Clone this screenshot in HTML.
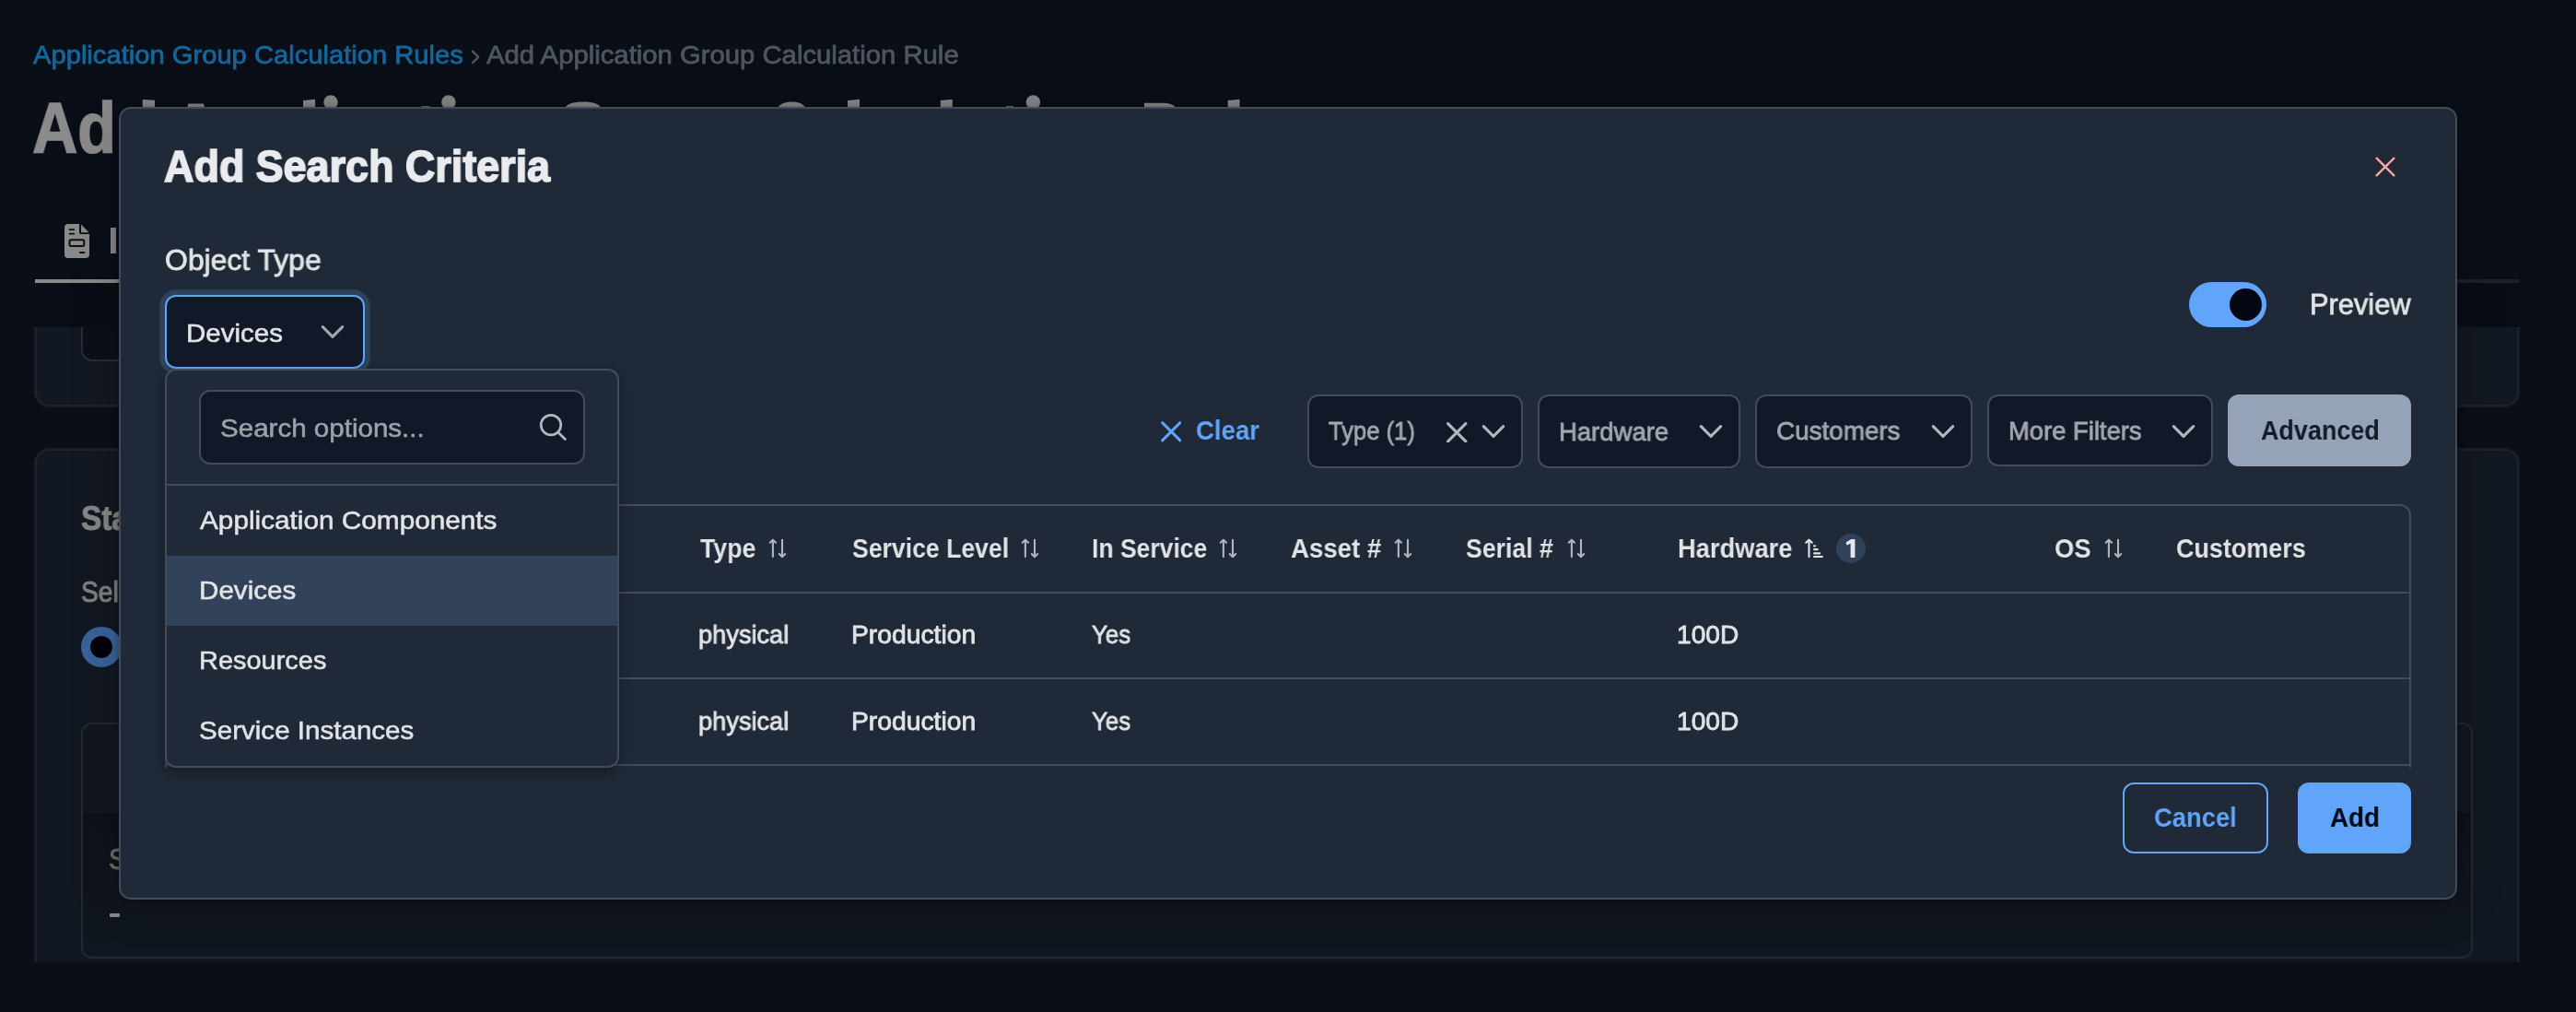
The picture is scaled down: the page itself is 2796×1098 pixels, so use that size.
<!DOCTYPE html>
<html><head><meta charset="utf-8"><title>Add Application Group Calculation Rule</title>
<style>
html,body{margin:0;padding:0}
body{width:2796px;height:1098px;overflow:hidden;background:#0a0e17;position:relative;font-family:"Liberation Sans",sans-serif}
.a{position:absolute;display:block}
.t{position:absolute;white-space:nowrap;line-height:1;transform-origin:0 0;display:block;will-change:transform}
.box{position:absolute;box-sizing:border-box}
#modal{left:129px;top:116px;width:2538px;height:860px;background:#1f2937;border:2px solid #424b57;border-radius:13px;box-shadow:0 2px 8px rgba(0,0,0,.3),0 0 56px rgba(0,0,0,.2)}
.inp{background:#111827;border:2px solid #424b57;border-radius:12px}
.hl{position:absolute;background:#424b57}
</style></head><body>

<!-- ============ dimmed page behind the dialog ============ -->
<div id="page">
<svg class="a" style="left:510px;top:53px" width="12" height="18" viewBox="0 0 12 18" fill="none" stroke="#4e5661" stroke-width="2.4" stroke-linecap="round" stroke-linejoin="round"><path d="M3 2.6L9.2 8.9L3 15.2"/></svg>

<!-- tops of the page title glyphs peeking above the dialog -->
<svg class="a" style="left:129px;top:96px" width="1300" height="22" viewBox="129 96 1300 22" fill="#8a8a8a">
 <path d="M154.8 118V107.9L168 108.8V118Z"/>
 <path d="M203 118L204.4 112.5H221L222.6 118Z"/>
 <path d="M329 118V108.9L342.1 107.7V118Z"/>
 <circle cx="359" cy="110.9" r="7.7"/>
 <path d="M457.5 118V115.2H466.5V118Z"/>
 <circle cx="486.9" cy="110.9" r="7.7"/>
 <path d="M613 118C614.5 112.6 622 110.4 633 110.4C644 110.4 651 112.6 653 118Z"/>
 <path d="M843 118C846 112.6 852 110.4 859.5 110.4C867 110.4 872.5 112.6 875 118Z"/>
 <path d="M920 118V108.9L933 107.7V118Z"/>
 <path d="M1020.8 118V108.9L1033.8 107.7V118Z"/>
 <path d="M1092 118V115.2H1100V118Z"/>
 <circle cx="1121.4" cy="110.9" r="7.7"/>
 <path d="M1242 118V111.7H1262C1270 111.7 1275 114 1277 118Z"/>
 <path d="M1332.7 118V108.9L1345.5 107.7V118Z"/>
</svg>

<!-- tab -->
<svg class="a" style="left:70px;top:243px" width="27" height="37" viewBox="0 0 27 37">
 <path d="M4 0H16V9.2Q16 11 17.8 11H27V33Q27 37 23 37H4Q0 37 0 33V4Q0 0 4 0Z" fill="#8a8a8a"/>
 <path d="M18 .6L26.6 9.2H18Z" fill="#8a8a8a"/>
 <rect x="4.7" y="5.2" width="6.4" height="1.9" rx=".9" fill="#0a0e17"/>
 <rect x="4.7" y="9.7" width="6.4" height="1.9" rx=".9" fill="#0a0e17"/>
 <rect x="5.5" y="17.3" width="15.8" height="6.6" rx="1.6" fill="none" stroke="#0a0e17" stroke-width="2"/>
 <rect x="16" y="30.1" width="6.3" height="1.9" rx=".9" fill="#0a0e17"/>
</svg>
<div class="a" style="left:119.8px;top:247px;width:6.2px;height:28px;background:#878787"></div>
<div class="a" style="left:38px;top:303px;width:2696px;height:4px;background:#1c2129"></div>
<div class="a" style="left:38px;top:303px;width:420px;height:4px;background:#8a8a8a"></div>
<div class="a" style="left:38px;top:307px;width:2696px;height:48px;background:#090d15"></div>

<!-- card 1 (scrolled under sticky band) -->
<div class="box" style="left:38px;top:339px;width:2696px;height:102px;background:#121821;border:2px solid #1e242d;border-radius:16px;clip-path:inset(16px -6px -6px -6px);box-shadow:0 0 3px 1px rgba(36,42,52,.55)"></div>
<div class="box" style="left:88px;top:340px;width:1200px;height:52px;background:#0b0f17;border:2px solid #272d38;border-radius:12px;clip-path:inset(15px 0 0 0)"></div>

<!-- card 2 -->
<div class="box" style="left:38px;top:487px;width:2696px;height:600px;background:#121821;border:2px solid #1e242d;border-radius:16px;clip-path:inset(-6px -6px 43.5px -6px);box-shadow:0 0 3px 1px rgba(36,42,52,.55)"></div>
<div class="a" style="left:88px;top:680px;width:44px;height:44px;border-radius:50%;box-sizing:border-box;border:10px solid #3a6399;background:#020409"></div>
<div class="box" style="left:88px;top:784px;width:2596px;height:256px;background:linear-gradient(#0d1118 38%,#111720 100%);border:2px solid #232933;border-radius:12px;overflow:hidden"><div style="height:96px;background:#12171f"></div></div>
<div class="a" style="left:119.3px;top:991px;width:11.2px;height:3.6px;background:#8a8a8a;border-radius:1px"></div>
<span class="t" id="bc1" style="left:36.20px;top:46.29px;font-size:28px;font-weight:400;color:#14679c;-webkit-text-stroke:0.8px #14679c;transform:scaleX(1.0415);">Application Group Calculation Rules</span>
<span class="t" id="bc2" style="left:528.40px;top:46.29px;font-size:28px;font-weight:400;color:#4e5661;-webkit-text-stroke:0.8px #4e5661;transform:scaleX(1.0456);">Add Application Group Calculation Rule</span>
<span class="t" id="title" style="left:35.29px;top:100.80px;font-size:77px;font-weight:700;color:#8b8b8b;-webkit-text-stroke:1.5px #8b8b8b;transform:scaleX(0.8855);">Ad</span>
<span class="t" id="sta" style="left:88.35px;top:543.97px;font-size:37px;font-weight:700;color:#878787;-webkit-text-stroke:1px #878787;transform:scaleX(0.9000);">Static</span>
<span class="t" id="sel" style="left:88.37px;top:625.91px;font-size:32px;font-weight:400;color:#818181;-webkit-text-stroke:1px #818181;transform:scaleX(0.8800);">Sel</span>
<span class="t" id="s2" style="left:117.72px;top:915.91px;font-size:32px;font-weight:400;color:#6e6e6e;-webkit-text-stroke:0.9px #6e6e6e;transform:scaleX(0.9000);">S</span>
</div>

<!-- ============ dialog ============ -->
<div class="box" id="modal"></div>
<div id="dlg">
<svg class="a" style="left:2578px;top:170px" width="22" height="22" viewBox="0 0 22 22" fill="none" stroke="#fca5a5" stroke-width="2.3" stroke-linecap="round"><path d="M1.6 1.6L20.4 20.4M20.4 1.6L1.6 20.4"/></svg>

<!-- object type select (focused) -->
<div class="box" style="left:179px;top:320px;width:217px;height:80px;background:#111827;border:2px solid #60a5fa;border-radius:12px;box-shadow:0 0 0 5.7px #2c425e"></div>
<svg class="a" style="left:348px;top:352px" width="26" height="16" viewBox="0 0 26 16" fill="none" stroke="#a3a7ae" stroke-width="3.1" stroke-linecap="round" stroke-linejoin="round"><path d="M2.3 2.6L13 13.3L23.7 2.6"/></svg>

<!-- preview switch -->
<div class="a" style="left:2376px;top:306px;width:84px;height:49px;border-radius:25px;background:#60a5fa"></div>
<div class="a" style="left:2420px;top:313px;width:35px;height:35px;border-radius:50%;background:#030712"></div>

<!-- filter bar -->
<svg class="a" style="left:1259.5px;top:457px" width="22.5" height="22.5" viewBox="0 0 22.5 22.5" fill="none" stroke="#60a5fa" stroke-width="2.9" stroke-linecap="round"><path d="M1.6 1.6L20.9 20.9M20.9 1.6L1.6 20.9"/></svg>
<div class="box inp" style="left:1419px;top:428px;width:234px;height:80px"></div>
<svg class="a" style="left:1570px;top:457.7px" width="22.5" height="22.5" viewBox="0 0 22.5 22.5" fill="none" stroke="#b2b6bd" stroke-width="3.1" stroke-linecap="round"><path d="M1.6 1.6L20.9 20.9M20.9 1.6L1.6 20.9"/></svg>
<svg class="a" style="left:1608px;top:460px" width="26" height="16" viewBox="0 0 26 16" fill="none" stroke="#b2b6bd" stroke-width="3.1" stroke-linecap="round" stroke-linejoin="round"><path d="M2.3 2.6L13 13.3L23.7 2.6"/></svg>
<div class="box inp" style="left:1669px;top:428px;width:220px;height:80px"></div>
<svg class="a" style="left:1843.6px;top:460px" width="26" height="16" viewBox="0 0 26 16" fill="none" stroke="#b2b6bd" stroke-width="3.1" stroke-linecap="round" stroke-linejoin="round"><path d="M2.3 2.6L13 13.3L23.7 2.6"/></svg>
<div class="box inp" style="left:1905px;top:428px;width:236px;height:80px"></div>
<svg class="a" style="left:2096px;top:460px" width="26" height="16" viewBox="0 0 26 16" fill="none" stroke="#b2b6bd" stroke-width="3.1" stroke-linecap="round" stroke-linejoin="round"><path d="M2.3 2.6L13 13.3L23.7 2.6"/></svg>
<div class="box inp" style="left:2157px;top:428px;width:245px;height:78px"></div>
<svg class="a" style="left:2357px;top:460px" width="26" height="16" viewBox="0 0 26 16" fill="none" stroke="#b2b6bd" stroke-width="3.1" stroke-linecap="round" stroke-linejoin="round"><path d="M2.3 2.6L13 13.3L23.7 2.6"/></svg>
<div class="a" style="left:2418px;top:428px;width:199px;height:78px;border-radius:12px;background:#94a3b8"></div>

<!-- data table -->
<div class="box" style="left:179px;top:547px;width:2438px;height:300px;border:2px solid #424b57;border-radius:12px;clip-path:inset(0 0 14px 0)"></div>
<div class="hl" style="left:181px;top:642px;width:2434px;height:2px"></div>
<div class="hl" style="left:181px;top:735px;width:2434px;height:2px"></div>
<div class="hl" style="left:181px;top:829px;width:2434px;height:2px"></div>
<svg class="a" style="left:834px;top:584px" width="20" height="22" viewBox="0 0 20 22" fill="none" stroke="#b1b5bd" stroke-width="2.1" stroke-linecap="round" stroke-linejoin="round"><path d="M4.9 20.1V1.7M1.75 4.75L4.9 1.7L8.05 4.75M15 1.8V20.2M11.8 17.1L15 20.2L18.2 17.1"/></svg><svg class="a" style="left:1108px;top:584px" width="20" height="22" viewBox="0 0 20 22" fill="none" stroke="#b1b5bd" stroke-width="2.1" stroke-linecap="round" stroke-linejoin="round"><path d="M4.9 20.1V1.7M1.75 4.75L4.9 1.7L8.05 4.75M15 1.8V20.2M11.8 17.1L15 20.2L18.2 17.1"/></svg><svg class="a" style="left:1323px;top:584px" width="20" height="22" viewBox="0 0 20 22" fill="none" stroke="#b1b5bd" stroke-width="2.1" stroke-linecap="round" stroke-linejoin="round"><path d="M4.9 20.1V1.7M1.75 4.75L4.9 1.7L8.05 4.75M15 1.8V20.2M11.8 17.1L15 20.2L18.2 17.1"/></svg><svg class="a" style="left:1513px;top:584px" width="20" height="22" viewBox="0 0 20 22" fill="none" stroke="#b1b5bd" stroke-width="2.1" stroke-linecap="round" stroke-linejoin="round"><path d="M4.9 20.1V1.7M1.75 4.75L4.9 1.7L8.05 4.75M15 1.8V20.2M11.8 17.1L15 20.2L18.2 17.1"/></svg><svg class="a" style="left:1700.7px;top:584px" width="20" height="22" viewBox="0 0 20 22" fill="none" stroke="#b1b5bd" stroke-width="2.1" stroke-linecap="round" stroke-linejoin="round"><path d="M4.9 20.1V1.7M1.75 4.75L4.9 1.7L8.05 4.75M15 1.8V20.2M11.8 17.1L15 20.2L18.2 17.1"/></svg><svg class="a" style="left:2284px;top:584px" width="20" height="22" viewBox="0 0 20 22" fill="none" stroke="#b1b5bd" stroke-width="2.1" stroke-linecap="round" stroke-linejoin="round"><path d="M4.9 20.1V1.7M1.75 4.75L4.9 1.7L8.05 4.75M15 1.8V20.2M11.8 17.1L15 20.2L18.2 17.1"/></svg>
<svg class="a" style="left:1958px;top:584px" width="22" height="22" viewBox="0 0 22 22" fill="none" stroke="#e2e3e5" stroke-linecap="round" stroke-linejoin="round">
 <path stroke-width="2.1" d="M5.5 20.1V1.7M2.2 4.8L5.5 1.7L8.8 4.8"/>
 <path stroke-width="2.2" d="M11.1 8.3H12M11.1 12.1H14.7M11.1 16.3H17.2M11.1 20H19.9"/>
</svg>
<div class="a" style="left:1993px;top:579px;width:32px;height:32px;border-radius:50%;background:#30415a"></div>
<svg class="a" style="left:2003px;top:584px" width="12" height="22" viewBox="0 0 12 22"><path d="M6.3 .9H10.4V21.1H5.6V5.6L2.5 7.2Q1.6 7.6 1.2 6.8L.8 5.6Q.5 4.6 1.4 4.1Z" fill="#e6e8eb"/></svg>

<!-- object type dropdown overlay -->
<div class="box" style="left:179px;top:400px;width:493px;height:433px;background:#1f2937;border:2px solid #424b57;border-radius:12px;box-shadow:0 4px 12px 1px rgba(0,0,0,.3)"></div>
<div class="box inp" style="left:216px;top:423px;width:419px;height:81px"></div>
<svg class="a" style="left:584px;top:447px" width="32" height="32" viewBox="0 0 32 32" fill="none" stroke="#b2b6bd" stroke-width="2.7" stroke-linecap="round"><circle cx="14" cy="14.1" r="10.8"/><path d="M22 22.2L29.4 29.5"/></svg>
<div class="hl" style="left:181px;top:525px;width:489px;height:2px"></div>
<div class="a" style="left:181px;top:603px;width:489px;height:76px;background:#31425a"></div>

<!-- footer buttons -->
<div class="box" style="left:2304px;top:849px;width:158px;height:77px;border:2px solid #60a5fa;border-radius:12px"></div>
<div class="a" style="left:2494px;top:849px;width:123px;height:77px;border-radius:12px;background:#60a5fa"></div>

<span class="t" id="mtitle" style="left:177.50px;top:155.50px;font-size:48.3px;font-weight:700;color:#e9ebee;-webkit-text-stroke:1.7px #e9ebee;transform:scaleX(0.9293);">Add Search Criteria</span>
<span class="t" id="objtype" style="left:178.50px;top:266.11px;font-size:32px;font-weight:400;color:#e2e3e5;-webkit-text-stroke:0.8px #e2e3e5;transform:scaleX(0.9970);">Object Type</span>
<span class="t" id="devsel" style="left:202.06px;top:346.97px;font-size:28.5px;font-weight:400;color:#e2e3e5;-webkit-text-stroke:0.55px #e2e3e5;transform:scaleX(1.0364);">Devices</span>
<span class="t" id="search" style="left:239.10px;top:449.57px;font-size:28.5px;font-weight:400;color:#9da1a8;-webkit-text-stroke:0.55px #9da1a8;transform:scaleX(1.0368);">Search options...</span>
<span class="t" id="opt1" style="left:216.94px;top:550.17px;font-size:28.5px;font-weight:400;color:#e2e3e5;-webkit-text-stroke:0.55px #e2e3e5;transform:scaleX(1.0439);">Application Components</span>
<span class="t" id="opt2" style="left:215.96px;top:626.37px;font-size:28.5px;font-weight:400;color:#e2e3e5;-webkit-text-stroke:0.55px #e2e3e5;transform:scaleX(1.0395);">Devices</span>
<span class="t" id="opt3" style="left:216.01px;top:702.47px;font-size:28.5px;font-weight:400;color:#e2e3e5;-webkit-text-stroke:0.55px #e2e3e5;transform:scaleX(1.0161);">Resources</span>
<span class="t" id="opt4" style="left:215.90px;top:778.47px;font-size:28.5px;font-weight:400;color:#e2e3e5;-webkit-text-stroke:0.55px #e2e3e5;transform:scaleX(1.0373);">Service Instances</span>
<span class="t" id="clear" style="left:1298.27px;top:451.92px;font-size:29.5px;font-weight:700;color:#60a5fa;transform:scaleX(0.9344);">Clear</span>
<span class="t" id="ftype" style="left:1442.00px;top:454.29px;font-size:28px;font-weight:400;color:#a3a7ae;-webkit-text-stroke:0.8px #a3a7ae;transform:scaleX(0.9134);">Type (1)</span>
<span class="t" id="fhw" style="left:1692.04px;top:454.69px;font-size:28px;font-weight:400;color:#a3a7ae;-webkit-text-stroke:0.8px #a3a7ae;transform:scaleX(0.9814);">Hardware</span>
<span class="t" id="fcust" style="left:1928.01px;top:454.29px;font-size:28px;font-weight:400;color:#a3a7ae;-webkit-text-stroke:0.8px #a3a7ae;transform:scaleX(0.9943);">Customers</span>
<span class="t" id="fmore" style="left:2179.84px;top:454.29px;font-size:28px;font-weight:400;color:#a3a7ae;-webkit-text-stroke:0.8px #a3a7ae;transform:scaleX(0.9779);">More Filters</span>
<span class="t" id="adv" style="left:2453.70px;top:451.62px;font-size:29.5px;font-weight:700;color:#141a26;transform:scaleX(0.9131);">Advanced</span>
<span class="t" id="preview" style="left:2506.88px;top:313.91px;font-size:32px;font-weight:400;color:#e2e3e5;-webkit-text-stroke:0.8px #e2e3e5;transform:scaleX(0.9624);">Preview</span>
<span class="t" id="hType" style="left:759.70px;top:580.22px;font-size:29.5px;font-weight:700;color:#e2e3e5;transform:scaleX(0.9056);">Type</span>
<span class="t" id="hSL" style="left:925.00px;top:580.22px;font-size:29.5px;font-weight:700;color:#e2e3e5;transform:scaleX(0.9018);">Service Level</span>
<span class="t" id="hIS" style="left:1185.00px;top:580.22px;font-size:29.5px;font-weight:700;color:#e2e3e5;transform:scaleX(0.8984);">In Service</span>
<span class="t" id="hAsset" style="left:1400.70px;top:580.22px;font-size:29.5px;font-weight:700;color:#e2e3e5;transform:scaleX(0.9371);">Asset #</span>
<span class="t" id="hSerial" style="left:1591.00px;top:580.22px;font-size:29.5px;font-weight:700;color:#e2e3e5;transform:scaleX(0.9038);">Serial #</span>
<span class="t" id="hHW" style="left:1821.07px;top:580.22px;font-size:29.5px;font-weight:700;color:#e2e3e5;transform:scaleX(0.9257);">Hardware</span>
<span class="t" id="hOS" style="left:2229.77px;top:580.22px;font-size:29.5px;font-weight:700;color:#e2e3e5;transform:scaleX(0.9281);">OS</span>
<span class="t" id="hCust" style="left:2362.09px;top:580.22px;font-size:29.5px;font-weight:700;color:#e2e3e5;transform:scaleX(0.9130);">Customers</span>
<span class="t" id="cPhys0" style="left:758.43px;top:674.69px;font-size:28px;font-weight:400;color:#e2e3e5;-webkit-text-stroke:0.8px #e2e3e5;transform:scaleX(0.9713);">physical</span>
<span class="t" id="cProd0" style="left:923.98px;top:674.69px;font-size:28px;font-weight:400;color:#e2e3e5;-webkit-text-stroke:0.8px #e2e3e5;transform:scaleX(1.0101);">Production</span>
<span class="t" id="cYes0" style="left:1185.20px;top:674.69px;font-size:28px;font-weight:400;color:#e2e3e5;-webkit-text-stroke:0.8px #e2e3e5;transform:scaleX(0.9222);">Yes</span>
<span class="t" id="c1000" style="left:1819.99px;top:674.69px;font-size:28px;font-weight:400;color:#e2e3e5;-webkit-text-stroke:0.8px #e2e3e5;transform:scaleX(1.0060);">100D</span>
<span class="t" id="cPhys1" style="left:758.43px;top:768.99px;font-size:28px;font-weight:400;color:#e2e3e5;-webkit-text-stroke:0.8px #e2e3e5;transform:scaleX(0.9713);">physical</span>
<span class="t" id="cProd1" style="left:923.98px;top:768.99px;font-size:28px;font-weight:400;color:#e2e3e5;-webkit-text-stroke:0.8px #e2e3e5;transform:scaleX(1.0101);">Production</span>
<span class="t" id="cYes1" style="left:1185.20px;top:768.99px;font-size:28px;font-weight:400;color:#e2e3e5;-webkit-text-stroke:0.8px #e2e3e5;transform:scaleX(0.9222);">Yes</span>
<span class="t" id="c1001" style="left:1819.99px;top:768.99px;font-size:28px;font-weight:400;color:#e2e3e5;-webkit-text-stroke:0.8px #e2e3e5;transform:scaleX(1.0060);">100D</span>
<span class="t" id="cancel" style="left:2338.37px;top:872.02px;font-size:29.5px;font-weight:700;color:#60a5fa;transform:scaleX(0.9276);">Cancel</span>
<span class="t" id="add" style="left:2529.20px;top:872.02px;font-size:29.5px;font-weight:700;color:#030712;transform:scaleX(0.9418);">Add</span>
</div>
</body></html>
